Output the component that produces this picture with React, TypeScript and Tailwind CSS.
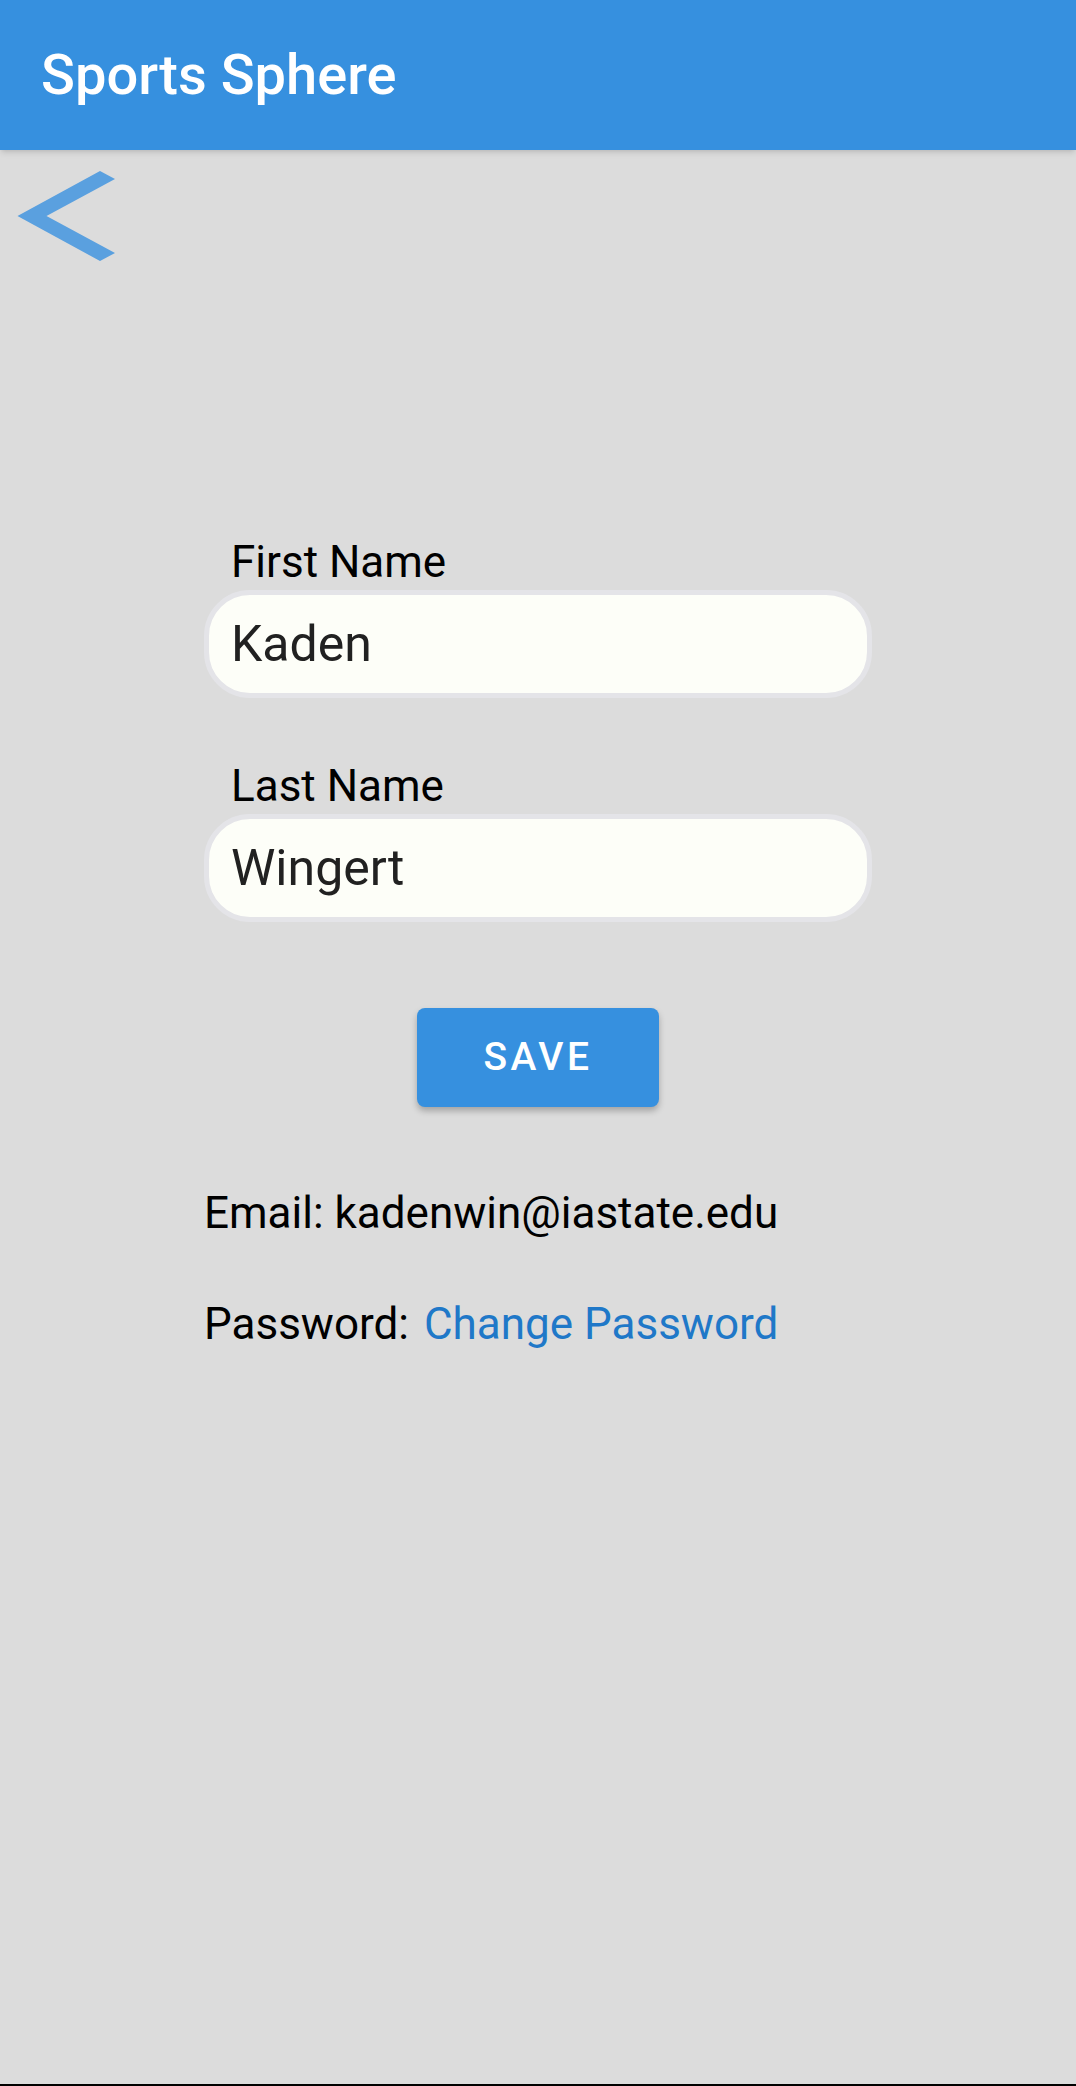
const font = { fontFamily: "Roboto, 'Noto Sans', sans-serif" };

function BackArrow() {
  return (
    <svg width="98" height="90" viewBox="17 171 98 90" aria-label="Back">
      <polygon
        points="100,171 115,179 46.5,216 115,253 100,261 17.5,216"
        fill="#5aa0df"
      />
    </svg>
  );
}

function Field({ label, value }: { label: string; value: string }) {
  return (
    <div className="flex flex-col">
      <label className="pl-[27px] text-[44px] leading-[48px] text-black">
        {label}
      </label>
      <div className="mt-[4px] h-[108px] rounded-[46px] border-[5px] border-[#e4e4e8] bg-[#fdfef8]">
        <input
          readOnly
          defaultValue={value}
          className="h-full w-full bg-transparent pl-[22px] text-[50px] text-[#212121] outline-none"
          style={font}
        />
      </div>
    </div>
  );
}

export default function App() {
  return (
    <div className="flex min-h-[2086px] flex-col bg-[#dcdcdc]" style={font}>
      <header className="relative z-10 flex h-[150px] items-center bg-[#3690df] pl-[41px] shadow-md">
        <h1 className="text-[56px] font-medium text-white">Sports Sphere</h1>
      </header>

      <main className="flex flex-1 flex-col">
        <div className="pl-[17px] pt-[21px]">
          <button>
            <BackArrow />
          </button>
        </div>

        <div className="mx-auto mt-[270px] flex w-[668px] flex-col">
          <Field label="First Name" value="Kaden" />
          <div className="mt-[64px]">
            <Field label="Last Name" value="Wingert" />
          </div>

          <button className="mx-auto mt-[86px] h-[99px] w-[242px] rounded-[8px] bg-[#3690df] text-[39px] font-medium tracking-[0.09em] text-white shadow-[0_4px_6px_rgba(0,0,0,0.25)]">
            SAVE
          </button>

          <p className="mt-[82px] text-[44px] leading-[48px] text-black">
            Email: kadenwin@iastate.edu
          </p>
          <p className="mt-[63px] text-[44px] leading-[48px] text-black">
            Password:
            <span className="ml-[4px] text-[#1f78c8]"> Change Password</span>
          </p>
        </div>
      </main>

      <div className="h-[2px] bg-black" />
    </div>
  );
}
